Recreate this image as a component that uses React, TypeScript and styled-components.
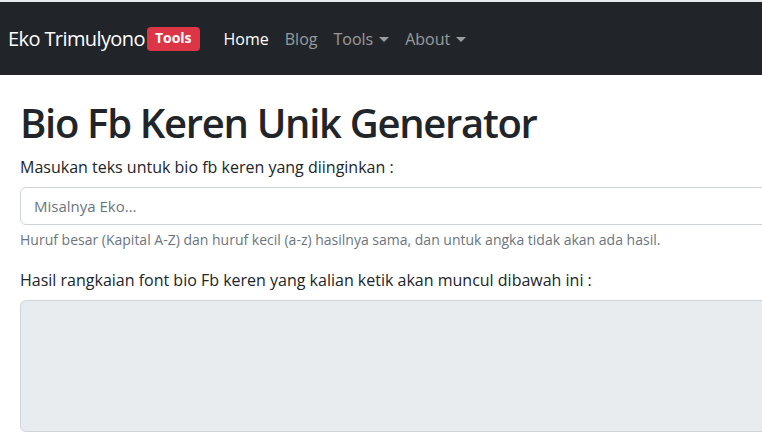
import styled, { createGlobalStyle } from "styled-components";

const GlobalStyle = createGlobalStyle`
    html, body {
        margin: 0;
        padding: 0;
        overflow: hidden;
        background: #ffffff;
    }
    body {
        font-family: "Segoe UI", "Open Sans", "Noto Sans", sans-serif;
        color: #212529;
        border-top: 2px solid #e9ecef;
    }
`;

const NavBar = styled.nav`
    height: 73px;
    background-color: #212529;
    display: flex;
    align-items: center;
    padding: 0 8px;
    gap: 16px;
`;

const Brand = styled.a`
    display: flex;
    align-items: center;
    color: #ffffff;
    font-size: 20px;
    letter-spacing: -0.6px;
    text-decoration: none;
    white-space: nowrap;
`;

const Badge = styled.span`
    background-color: #dc3545;
    color: #ffffff;
    font-size: 14px;
    font-weight: 700;
    letter-spacing: 0;
    border-radius: 4px;
    padding: 0 8px;
    height: 24px;
    line-height: 22px;
    margin-left: 2px;
`;

const NavList = styled.div`
    display: flex;
    align-items: center;
`;

interface NavItemProps {
    active?: boolean;
}

const NavItem = styled.a<NavItemProps>`
    color: ${({ active }) => (active ? "#ffffff" : "rgba(255,255,255,0.55)")};
    font-size: 16px;
    padding: 8px;
    text-decoration: none;
    display: flex;
    align-items: center;
    gap: 6px;
`;

const Caret = styled.span`
    width: 0;
    height: 0;
    border-left: 5px solid transparent;
    border-right: 5px solid transparent;
    border-top: 5px solid currentColor;
    margin-top: 2px;
`;

const Main = styled.main`
    width: 1100px;
    padding: 0 20px;
`;

const Title = styled.h1`
    font-size: 40px;
    font-weight: 600;
    letter-spacing: -1.3px;
    margin: 24px 0 8px;
    line-height: 1.2;
`;

const Label = styled.p`
    font-size: 16px;
    margin: 0 0 8px;
    line-height: 1.5;
`;

const Input = styled.input`
    display: block;
    box-sizing: border-box;
    width: 100%;
    height: 38px;
    padding: 6px 13px;
    font-size: 15px;
    font-family: inherit;
    border: 1px solid #ced4da;
    border-radius: 6px;
    color: #212529;
    &::placeholder {
        color: #6c757d;
    }
`;

const Help = styled.div`
    font-size: 14px;
    color: #6c757d;
    margin: 4px 0 18px;
    line-height: 1.5;
`;

const Output = styled.textarea`
    display: block;
    box-sizing: border-box;
    width: 100%;
    height: 132px;
    background-color: #e9ecef;
    border: 1px solid #ced4da;
    border-radius: 6px;
    resize: none;
`;

const App = () => {
    return (
        <>
            <GlobalStyle />
            <NavBar>
                <Brand href="#">
                    Eko Trimulyono<Badge>Tools</Badge>
                </Brand>
                <NavList>
                    <NavItem href="#" active>Home</NavItem>
                    <NavItem href="#">Blog</NavItem>
                    <NavItem href="#">Tools <Caret /></NavItem>
                    <NavItem href="#">About <Caret /></NavItem>
                </NavList>
            </NavBar>
            <Main>
                <Title>Bio Fb Keren Unik Generator</Title>
                <Label>Masukan teks untuk bio fb keren yang diinginkan :</Label>
                <Input placeholder="Misalnya Eko..." />
                <Help>
                    Huruf besar (Kapital A-Z) dan huruf kecil (a-z) hasilnya sama, dan untuk angka tidak akan ada hasil.
                </Help>
                <Label>Hasil rangkaian font bio Fb keren yang kalian ketik akan muncul dibawah ini :</Label>
                <Output readOnly />
            </Main>
        </>
    );
};

export default App;
